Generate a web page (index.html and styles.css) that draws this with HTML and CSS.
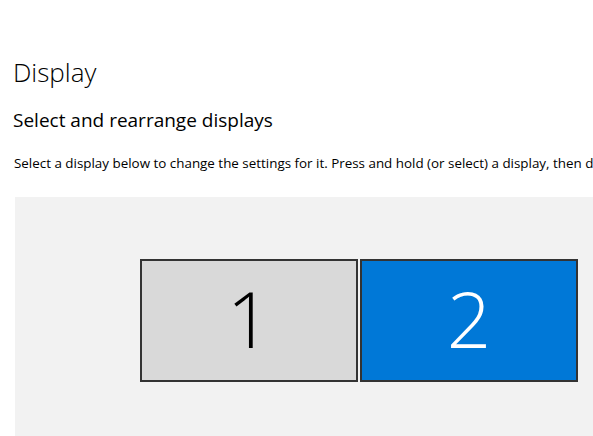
FILE: index.html
```html
<!DOCTYPE html>
<html lang="en">
<head>
  <meta charset="UTF-8">
  <meta name="viewport" content="width=device-width, initial-scale=1.0">
  <title>Display</title>
  <link rel="stylesheet" href="styles.css">
</head>
<body>
  <div class="page">
    <h1>Display</h1>
    <h2>Select and rearrange displays</h2>
    <p class="hint">Select a display below to change the settings for it. Press and hold (or select) a display, then drag to rearrange it.</p>
    <div class="arrange">
      <div class="monitor">1</div>
      <div class="monitor selected">2</div>
    </div>
  </div>
</body>
</html>
```

FILE: styles.css
```css
html, body {
  margin: 0;
  height: 100%;
  overflow: hidden;
  background: #fff;
}

body {
  font-family: "Open Sans", "Noto Sans", sans-serif;
  color: #000;
}

.page {
  padding: 0 0 0 13px;
  display: flex;
  flex-direction: column;
  height: 100%;
  overflow: hidden;
}

h1 {
  font-size: 26px;
  font-weight: 300;
  line-height: 36px;
  margin: 54px 0 0 0;
}

h2 {
  font-size: 19px;
  font-weight: 400;
  line-height: 28px;
  margin: 16px 0 0 0;
}

.hint {
  font-size: 13.4px;
  line-height: 18px;
  margin: 20px 0 0 1px;
  white-space: nowrap;
}

.arrange {
  flex: 1;
  margin: 25px 0 0 2px;
  background: #f2f2f2;
  display: flex;
  align-items: flex-start;
  gap: 2px;
  padding: 62px 0 0 125px;
}

.monitor {
  flex: none;
  box-sizing: border-box;
  width: 218px;
  height: 123px;
  border: 2px solid #333;
  background: #d9d9d9;
  font-size: 78px;
  font-weight: 300;
  line-height: 114px;
  text-align: center;
}

.monitor.selected {
  background: #0078d7;
  color: #fff;
}
```
